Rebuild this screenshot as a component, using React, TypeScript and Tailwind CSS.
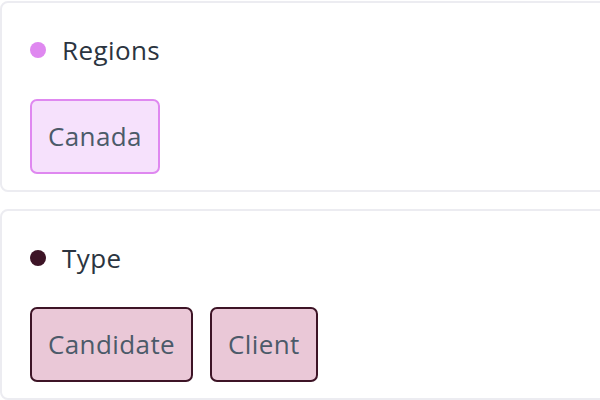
import React from "react";

function Chip({ label, variant }: { label: string; variant: "pink" | "wine" }) {
  const cls =
    variant === "pink"
      ? "border-[#df88f0] bg-[#f6e1fc]"
      : "border-[#3d1426] bg-[#eac8d7]";
  return (
    <div
      className={
        "flex h-[75px] items-center rounded-[7px] border-2 px-[16px] text-[26px] tracking-[0.4px] text-[#4b5a69] " +
        cls
      }
    >
      {label}
    </div>
  );
}

function Card({
  title,
  dot,
  chips,
  variant,
}: {
  title: string;
  dot: string;
  chips: string[];
  variant: "pink" | "wine";
}) {
  return (
    <div className="w-[640px] rounded-[8px] border-2 border-[#ececf1] bg-white pl-[28px] pt-[31px] pb-[16px]">
      <div className="flex h-[32px] items-center gap-[16px]">
        <span className={"h-[16px] w-[16px] rounded-full " + dot} />
        <span className="text-[26px] tracking-[0.4px] text-[#2b3440]">{title}</span>
      </div>
      <div className="mt-[33px] flex gap-[17px]">
        {chips.map((c) => (
          <Chip key={c} label={c} variant={variant} />
        ))}
      </div>
    </div>
  );
}

export default function App() {
  return (
    <div
      className="h-[400px] w-[600px] overflow-hidden bg-white pt-px"
      style={{ fontFamily: '"Open Sans", "Noto Sans", sans-serif' }}
    >
      <div className="flex flex-col gap-[17px]">
        <Card title="Regions" dot="bg-[#df88f0]" chips={["Canada"]} variant="pink" />
        <Card title="Type" dot="bg-[#3d1426]" chips={["Candidate", "Client"]} variant="wine" />
      </div>
    </div>
  );
}
